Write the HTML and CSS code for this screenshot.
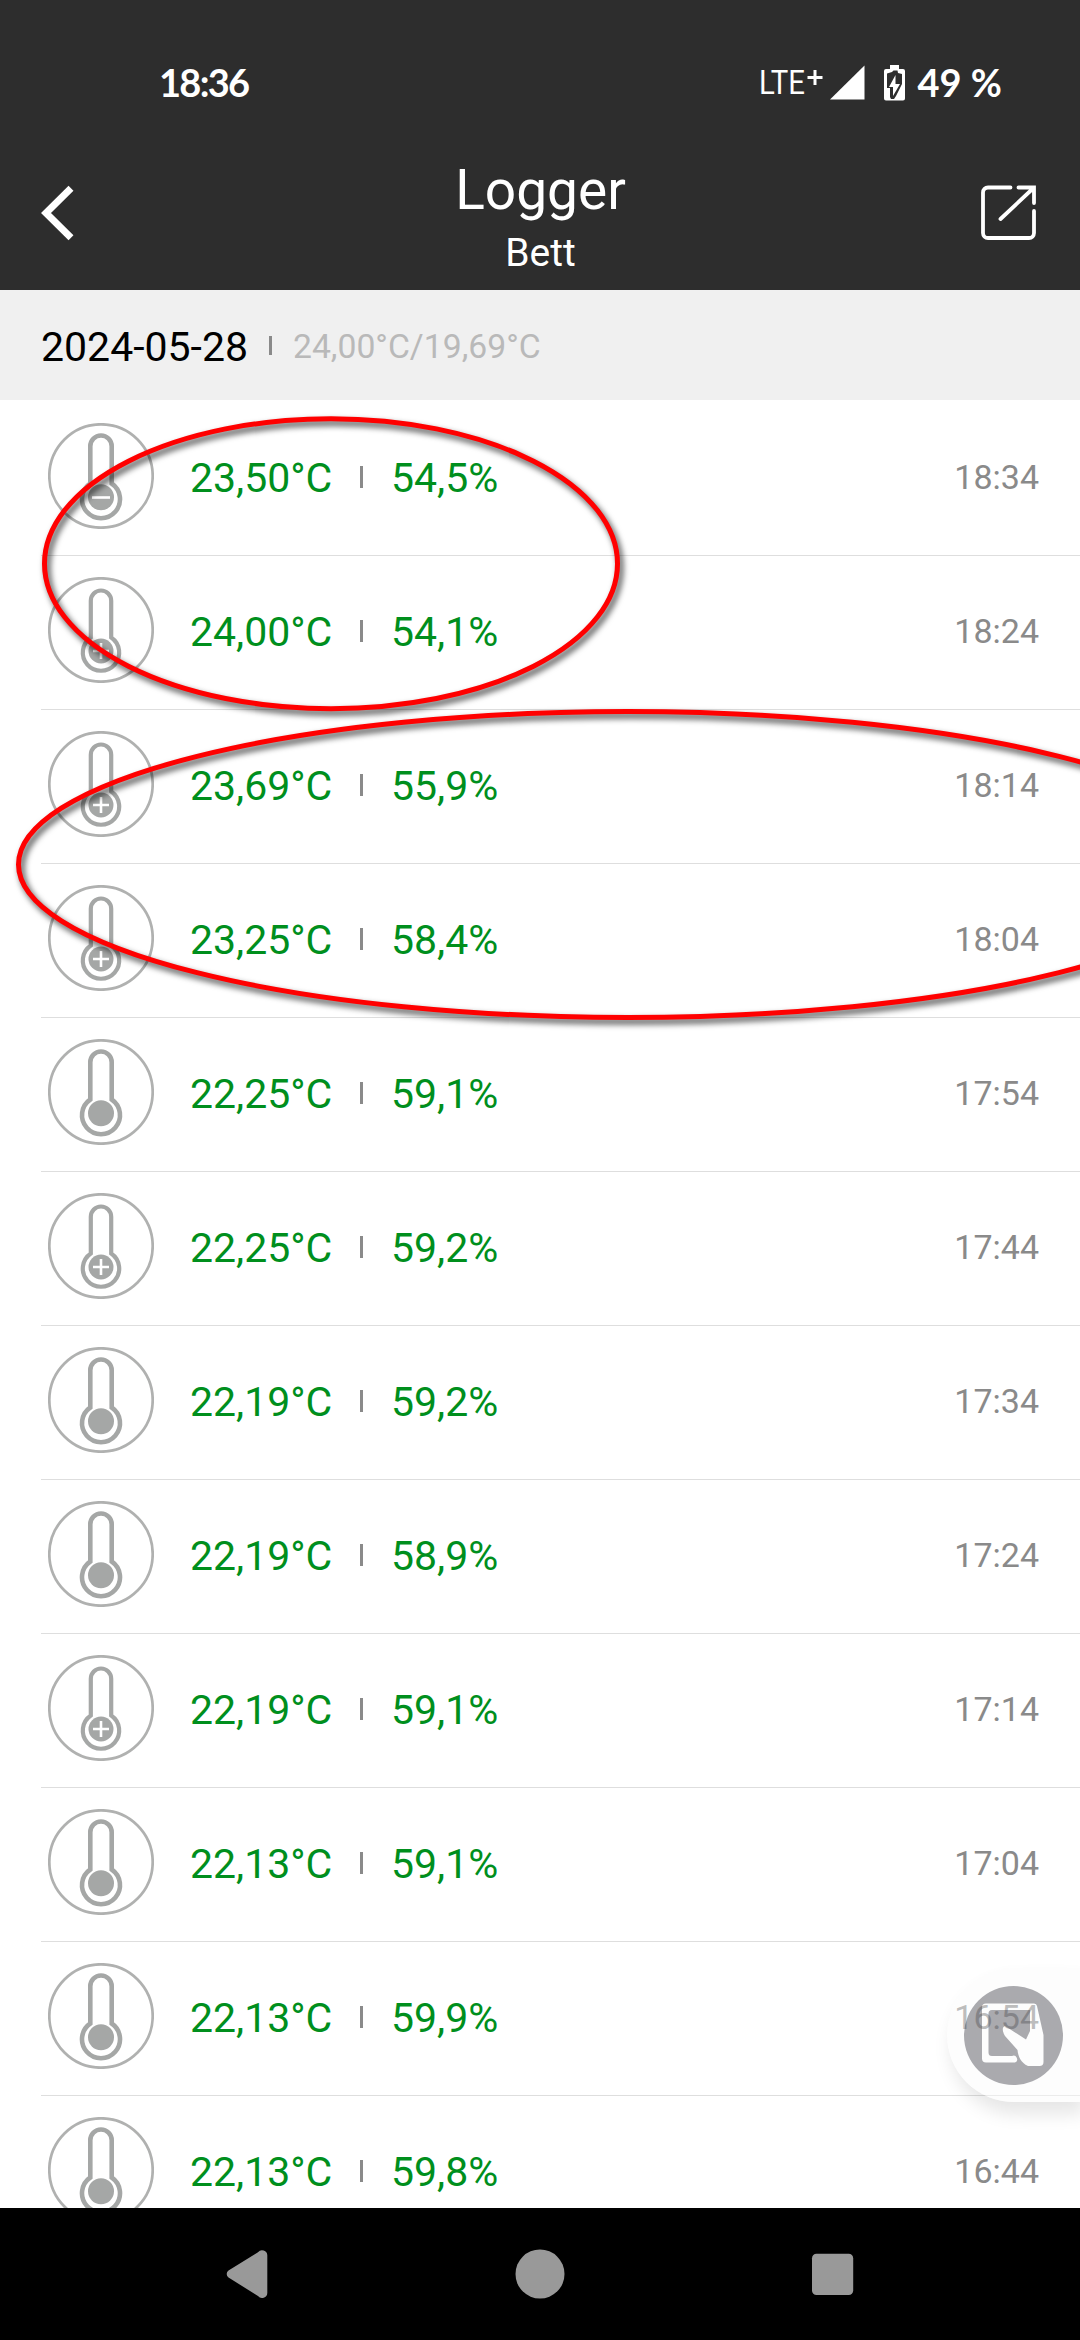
FILE: index.html
```
<!DOCTYPE html>
<html lang="de">
<head>
    <meta charset="UTF-8">
    <meta name="viewport" content="width=device-width, initial-scale=1.0">
    <title>Logger</title>
    <link rel="stylesheet" href="styles.css">
</head>
<body>
    <svg class="symbols">
        <symbol id="thermo" viewBox="0 0 106 106">
            <circle cx="53" cy="53" r="51.7" fill="none" stroke="#b0b1b0" stroke-width="2.7"/>
            <path d="M42.300 60.500V23.200a10.700 10.700 0 0 1 21.400 0V60.500a19 19 0 1 1-21.400 0z" fill="none" stroke="#a5a7a6" stroke-width="4.600"/>
            <circle cx="53" cy="74.300" r="13" fill="#a5a7a6"/>
        </symbol>
        <symbol id="thermo-small" viewBox="0 0 106 106">
            <circle cx="53" cy="53" r="51.7" fill="none" stroke="#b0b1b0" stroke-width="2.7"/>
            <path d="M42.800 60.500V23.700a10.200 10.200 0 0 1 20.400 0V60.500a18.200 18.200 0 1 1-20.400 0z" fill="none" stroke="#a5a7a6" stroke-width="4.200"/>
            <circle cx="53" cy="74" r="12.5" fill="#a5a7a6"/>
        </symbol>
    </svg>

    <div class="screen">
        <div class="status">
            <div class="clock">18:36</div>
            <div class="status-right">
                <svg class="lte" viewBox="0 0 66 36">
                    <text x="0" y="29" textLength="46" lengthAdjust="spacingAndGlyphs">LTE</text>
                    <path d="M48.500 12.500h15M56 5v15"/>
                </svg>
                <svg class="signal" viewBox="0 0 35 36"><path d="M0 34.500L34.500 0.500V34.500z"/></svg>
                <svg class="battery" viewBox="0 0 21 36">
                    <path fill="#fff" d="M6 0h9v4h4a2 2 0 0 1 2 2v27.500a2 2 0 0 1-2 2H2a2 2 0 0 1-2-2V6a2 2 0 0 1 2-2h4z"/>
                    <path fill="#2d2d2d" d="M3 8.500L8 7l1.500-1.500h4L14 8l4 1v10L12 31l-2 3H7l-1-2V23H3z"/>
                    <path fill="#fff" d="M11.500 10v9H16L9 31v-9H5z"/>
                </svg>
                <div class="percent">49 %</div>
            </div>
        </div>

        <div class="header">
            <svg class="back" viewBox="0 0 34 56"><path d="M30 3.300L5 28l25 24.700"/></svg>
            <div class="titles">
                <div class="title">Logger</div>
                <div class="subtitle">Bett</div>
            </div>
            <svg class="export" viewBox="0 0 56 56">
                <path d="M29.500 2.500H7a5 5 0 0 0-5 5V48a5 5 0 0 0 5 5H48a5 5 0 0 0 5-5V26"/>
                <path d="M37.500 2.500H53V18M52.500 3L19.500 34"/>
            </svg>
        </div>

        <div class="day">
            <div class="date">2024-05-28</div>
            <div class="day-bar"></div>
            <div class="range">24,00°C/19,69°C</div>
        </div>

        <div class="list" id="list"></div>

        <div class="nav">
            <svg viewBox="0 0 48 54"><path d="M34 5.200a5.200 5.200 0 0 1 9.300 3V46a5.200 5.200 0 0 1-9.300 3L4.500 30.500a4.300 4.300 0 0 1 0-7z"/></svg>
            <svg viewBox="0 0 48 54"><circle cx="24" cy="27" r="24.500"/></svg>
            <svg viewBox="0 0 48 54"><rect x="4" y="6.700" width="41.200" height="41.300" rx="4.500"/></svg>
        </div>

        <!-- hand drawn marks over the list -->
        <svg class="marks" viewBox="0 0 1080 2340">
            <ellipse cx="331" cy="563.700" rx="286.500" ry="145"/>
            <ellipse cx="628" cy="864.500" rx="609.500" ry="153"/>
        </svg>

        <div class="float">
            <svg viewBox="0 0 99 99">
                <path fill-rule="evenodd" d="M49.500 0a49.500 49.500 0 1 1 0 99a49.500 49.500 0 1 1 0-99zM22 17.500H70a3 3 0 0 1 3 2.500L79.500 49V76a4 4 0 0 1-4 4H64C57 77 54 70 53.500 64L41 50C38 45 38 41 41 40L62 53.500L66 45V24H28a3.500 3.500 0 0 0-3.500 3.500V66.500a3.500 3.500 0 0 0 3.500 3.500H48a3.500 3.500 0 0 1 3 6.500H22a4 4 0 0 1-4-4V21.500a4 4 0 0 1 4-4z"/>
            </svg>
        </div>
    </div>

    <script src="script.js"></script>
</body>
</html>
```
FILE: styles.css
```
*{
    margin: 0;
    padding: 0;
    box-sizing: border-box;
}
body{
    font-family: Roboto, sans-serif;
    background-color: #fff;
    overflow: hidden;
}
svg{
    display: block;
    flex-shrink: 0;
    overflow: visible;
}
.symbols{
    display: none;
}
.screen{
    position: relative;
    width: 1080px;
    height: 2340px;
    display: flex;
    flex-direction: column;
    overflow: hidden;
}

/* status bar */
.status{
    height: 150px;
    padding: 17px 78px 0 159px;
    background-color: #2d2d2d;
    color: #fff;
    display: flex;
    align-items: flex-start;
    justify-content: space-between;
    font-family: Lato, sans-serif;
    font-weight: 700;
    font-size: 38px;
    line-height: 131px;
}
.clock{
    letter-spacing: -1.7px;
}
.status-right{
    display: flex;
}
.status-right svg{
    height: 36px;
    margin-top: 48px;
}
.lte{
    width: 66px;
    margin-right: 5px;
}
.lte text{
    font-family: Roboto, sans-serif;
    font-size: 34px;
    font-weight: 400;
    line-height: 36px;
    fill: #fff;
}
.lte path{
    stroke: #fff;
    stroke-width: 3;
}
.signal{
    width: 35px;
    margin-right: 19px;
    fill: #fff;
}
.battery{
    width: 21px;
    margin-right: 13px;
}

/* title bar */
.header{
    height: 140px;
    padding: 0 43px 0 41px;
    background-color: #2d2d2d;
    color: #fff;
    display: flex;
    justify-content: space-between;
}
.back{
    width: 34px;
    height: 56px;
    margin-top: 35px;
    margin-right: 25px;
    fill: none;
    stroke: #fff;
    stroke-width: 7;
}
.titles{
    text-align: center;
}
.title{
    font-size: 55px;
    line-height: 64px;
    margin-top: 8px;
}
.subtitle{
    font-size: 39px;
    line-height: 46px;
    margin-top: 8px;
}
.export{
    width: 56px;
    height: 56px;
    margin-top: 35px;
    fill: none;
    stroke: #fff;
    stroke-width: 3.8;
    stroke-linecap: round;
}

/* day heading */
.day{
    height: 110px;
    padding-left: 41px;
    background-color: #f0f0f0;
    display: flex;
    align-items: center;
}
.date{
    width: 228px;
    padding-top: 3px;
    font-size: 41px;
    color: #000;
}
.day-bar{
    width: 3px;
    height: 19px;
    margin-right: 21px;
    background-color: #8a8a8a;
}
.range{
    padding-top: 2px;
    font-size: 33.7px;
    color: #b9b9b9;
}

/* readings */
.list{
    height: 1808px;
    padding: 2px 0 0 41px;
    overflow: hidden;
}
.row{
    height: 154px;
    padding: 0 41px 3px 7px;
    border-bottom: 1px solid #dedede;
    display: flex;
    align-items: center;
}
.icon{
    width: 106px;
    height: 106px;
    margin: 0 36px 3px 0;
}
.sign{
    fill: none;
    stroke: #fff;
    stroke-width: 2.6;
}
.temp{
    width: 170px;
    padding-top: 1px;
    font-size: 41px;
    color: #008f1d;
}
.bar{
    width: 3px;
    height: 22px;
    margin-right: 28px;
    background-color: #8a8a8a;
}
.hum{
    flex: 1;
    padding-top: 1px;
    font-size: 41px;
    color: #008f1d;
}
.time{
    font-size: 34px;
    color: #8a8a8a;
}

/* android navigation */
.nav{
    height: 132px;
    padding: 0 224px;
    background-color: #000;
    display: flex;
    align-items: center;
    justify-content: space-between;
    fill: #999;
}
.nav svg{
    width: 48px;
    height: 54px;
}

.marks{
    position: absolute;
    top: 0;
    left: 0;
    width: 1080px;
    height: 2340px;
    fill: none;
    stroke: #f00;
    stroke-width: 5;
}
.marks ellipse{
    filter: drop-shadow(3px 4px 3px rgba(0, 0, 0, 0.75));
}

/* floating button docked on the right edge */
.float{
    position: absolute;
    top: 1968px;
    right: 0;
    width: 133px;
    height: 134px;
    padding: 18px 0 0 17px;
    border-radius: 67px 0 0 67px;
    background-color: rgba(250, 250, 250, 0.45);
    box-shadow: 4px 12px 18px rgba(0, 0, 0, 0.1);
}
.float svg{
    width: 99px;
    height: 99px;
    fill: rgba(50, 52, 60, 0.41);
}
```
FILE: script.js
```
const readings = [
    ["23,50", "54,5", "18:34", "minus"],
    ["24,00", "54,1", "18:24", "plus"],
    ["23,69", "55,9", "18:14", "plus"],
    ["23,25", "58,4", "18:04", "plus"],
    ["22,25", "59,1", "17:54", ""],
    ["22,25", "59,2", "17:44", "plus"],
    ["22,19", "59,2", "17:34", ""],
    ["22,19", "58,9", "17:24", ""],
    ["22,19", "59,1", "17:14", "plus"],
    ["22,13", "59,1", "17:04", ""],
    ["22,13", "59,9", "16:54", ""],
    ["22,13", "59,8", "16:44", ""]
];
const signs = {
    minus: '<path class="sign" d="M44 74.500h18"/>',
    plus: '<path class="sign" d="M45 74h16M53 66v16"/>'
};

let html = "";
readings.forEach(([temp, hum, time, sign]) => {
    let shape = sign === "plus" ? "thermo-small" : "thermo";
    html += `<div class="row">
        <svg class="icon" viewBox="0 0 106 106"><use href="#${shape}"/>${signs[sign] || ""}</svg>
        <div class="temp">${temp}°C</div>
        <div class="bar"></div>
        <div class="hum">${hum}%</div>
        <div class="time">${time}</div>
    </div>`;
});
document.getElementById("list").innerHTML = html;
```
